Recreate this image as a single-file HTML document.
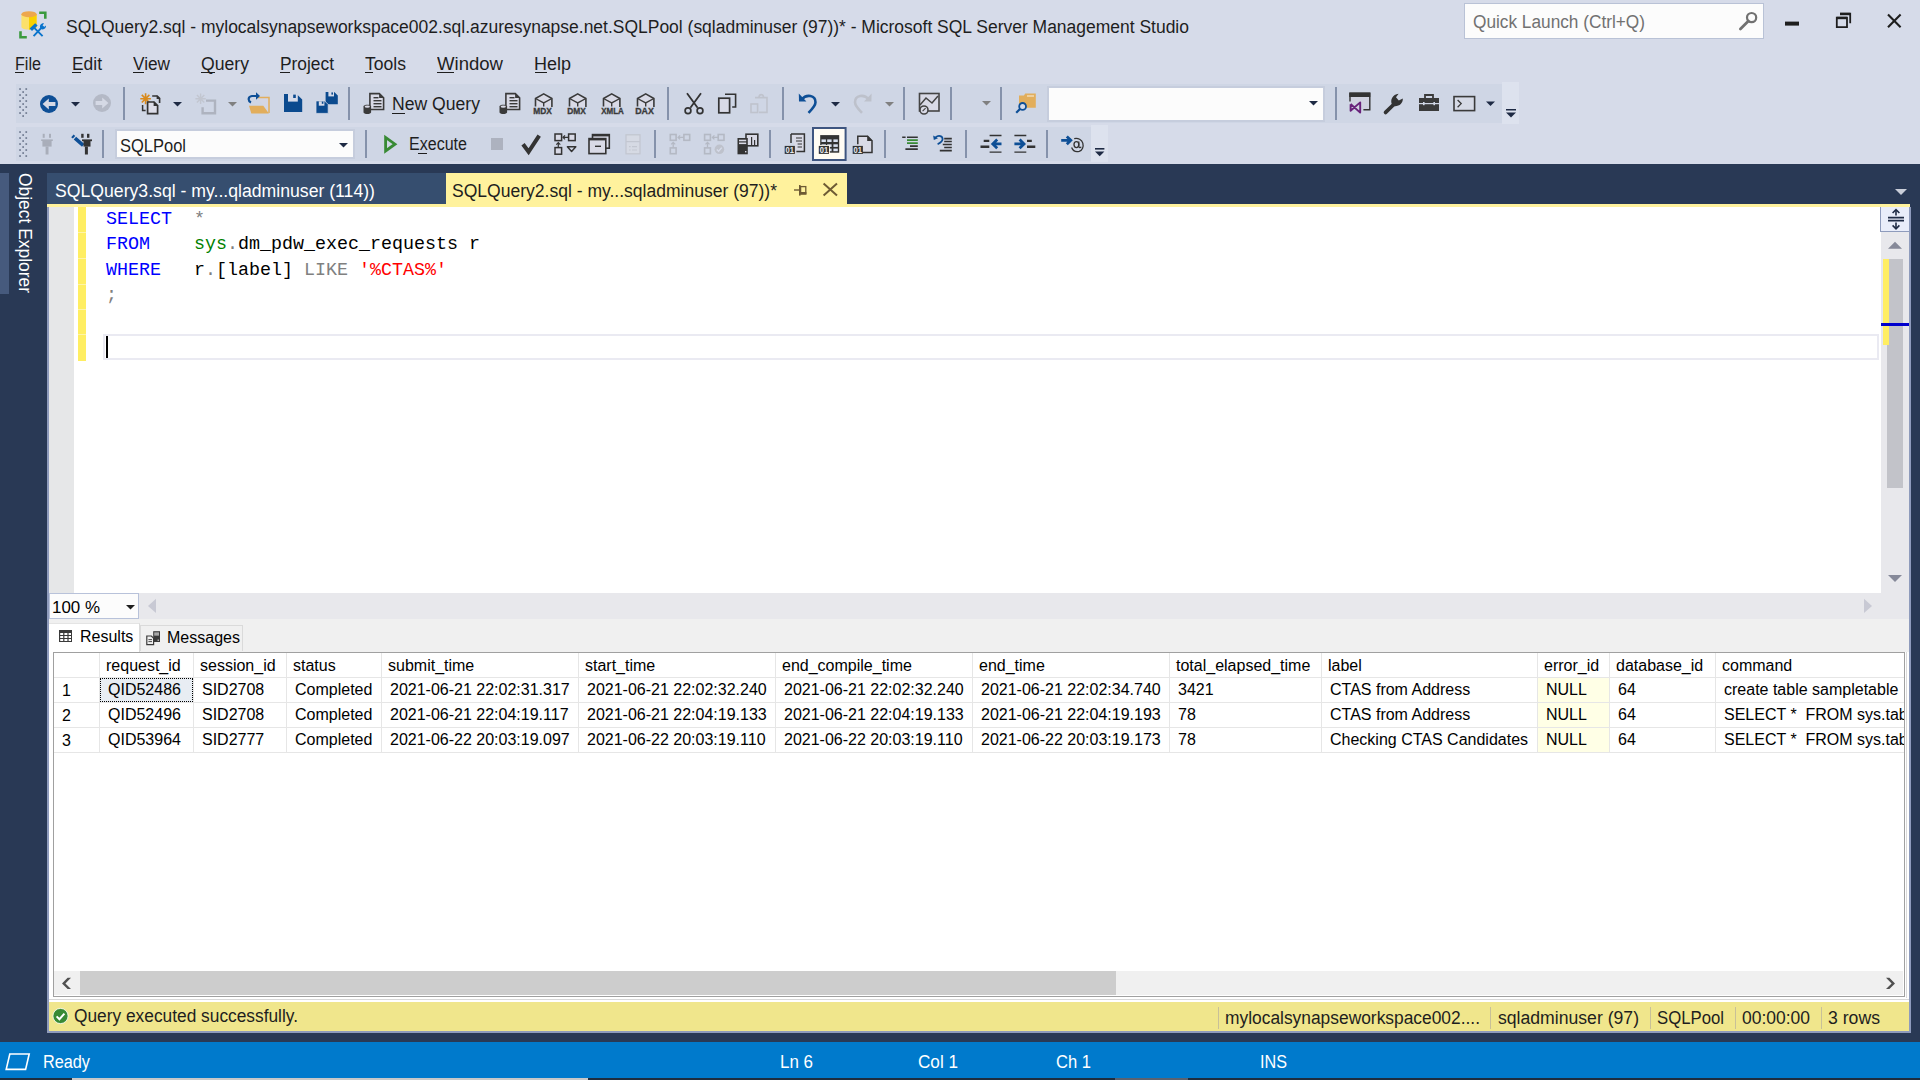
<!DOCTYPE html>
<html><head><meta charset="utf-8"><title>SSMS</title>
<style>
html,body{margin:0;padding:0;}
body{width:1920px;height:1080px;position:relative;overflow:hidden;background:#D6DBE9;font-family:"Liberation Sans",sans-serif;}
svg{display:block;overflow:visible}
</style></head><body>
<div style="position:absolute;left:66px;top:15.76px;font:18px/22px 'Liberation Sans', sans-serif;color:#1E1E1E;white-space:pre;transform:scaleX(0.9707);transform-origin:0 0;">SQLQuery2.sql - mylocalsynapseworkspace002.sql.azuresynapse.net.SQLPool (sqladminuser (97))* - Microsoft SQL Server Management Studio</div>
<div style="position:absolute;left:1464px;top:3px;width:300px;height:36px;background:#FCFCFC;box-sizing:border-box;border:1px solid #B9C2D6;"></div>
<div style="position:absolute;left:1473px;top:10.76px;font:18px/22px 'Liberation Sans', sans-serif;color:#717171;white-space:pre;transform:scaleX(0.9579);transform-origin:0 0;">Quick Launch (Ctrl+Q)</div>
<div style="position:absolute;left:15px;top:52.76px;font:18px/22px 'Liberation Sans', sans-serif;color:#1E1E1E;white-space:pre;transform:scaleX(0.8961);transform-origin:0 0;">File</div>
<div style="position:absolute;left:72px;top:52.76px;font:18px/22px 'Liberation Sans', sans-serif;color:#1E1E1E;white-space:pre;transform:scaleX(0.9668);transform-origin:0 0;">Edit</div>
<div style="position:absolute;left:133px;top:52.76px;font:18px/22px 'Liberation Sans', sans-serif;color:#1E1E1E;white-space:pre;transform:scaleX(0.9560);transform-origin:0 0;">View</div>
<div style="position:absolute;left:201px;top:52.76px;font:18px/22px 'Liberation Sans', sans-serif;color:#1E1E1E;white-space:pre;transform:scaleX(0.9790);transform-origin:0 0;">Query</div>
<div style="position:absolute;left:280px;top:52.76px;font:18px/22px 'Liberation Sans', sans-serif;color:#1E1E1E;white-space:pre;transform:scaleX(0.9637);transform-origin:0 0;">Project</div>
<div style="position:absolute;left:365px;top:52.76px;font:18px/22px 'Liberation Sans', sans-serif;color:#1E1E1E;white-space:pre;transform:scaleX(0.9755);transform-origin:0 0;">Tools</div>
<div style="position:absolute;left:437px;top:52.76px;font:18px/22px 'Liberation Sans', sans-serif;color:#1E1E1E;white-space:pre;transform:scaleX(1.0307);transform-origin:0 0;">Window</div>
<div style="position:absolute;left:534px;top:52.76px;font:18px/22px 'Liberation Sans', sans-serif;color:#1E1E1E;white-space:pre;transform:scaleX(0.9992);transform-origin:0 0;">Help</div>
<div style="position:absolute;left:16px;top:84px;width:1486px;height:39px;background:#CFD6E5;"></div>
<div style="position:absolute;left:1502px;top:82px;width:17px;height:42px;background:#DDE2EE;"></div>
<div style="position:absolute;left:16px;top:127px;width:1075px;height:34px;background:#CFD6E5;"></div>
<div style="position:absolute;left:1091px;top:125px;width:17px;height:37px;background:#DDE2EE;"></div>
<div style="position:absolute;left:1047px;top:86px;width:278px;height:36px;background:#FCFCFC;box-sizing:border-box;border:2px solid #C6CDDD;"></div>
<div style="position:absolute;left:115px;top:129px;width:240px;height:30px;background:#FCFCFC;box-sizing:border-box;border:2px solid #C6CDDD;"></div>
<div style="position:absolute;left:392px;top:93.36px;font:18px/22px 'Liberation Sans', sans-serif;color:#1E1E1E;white-space:pre;transform:scaleX(0.9774);transform-origin:0 0;">New Query</div>
<div style="position:absolute;left:120px;top:134.76px;font:18px/22px 'Liberation Sans', sans-serif;color:#1E1E1E;white-space:pre;transform:scaleX(0.9161);transform-origin:0 0;">SQLPool</div>
<div style="position:absolute;left:409px;top:133.36px;font:18px/22px 'Liberation Sans', sans-serif;color:#1E1E1E;white-space:pre;transform:scaleX(0.8917);transform-origin:0 0;">Execute</div>
<div style="position:absolute;left:0px;top:164px;width:1920px;height:878px;background:#293955;"></div>
<div style="position:absolute;left:0px;top:173px;width:9px;height:121px;background:#465A7D;"></div>
<div style="position:absolute;left:34px;top:173px;width:121px;height:20px;transform-origin:0 0;transform:rotate(90deg);"></div>
<div style="position:absolute;left:47px;top:173px;width:399px;height:31px;background:#364E6F;"></div>
<div style="position:absolute;left:446px;top:173px;width:401px;height:31px;background:#FFF29D;"></div>
<div style="position:absolute;left:47px;top:204px;width:1863px;height:3px;background:#FFF29D;"></div>
<div style="position:absolute;left:55px;top:179.76px;font:18px/22px 'Liberation Sans', sans-serif;color:#FFFFFF;white-space:pre;transform:scaleX(0.9802);transform-origin:0 0;">SQLQuery3.sql - my...qladminuser (114))</div>
<div style="position:absolute;left:452px;top:179.76px;font:18px/22px 'Liberation Sans', sans-serif;color:#1E1E1E;white-space:pre;transform:scaleX(0.9737);transform-origin:0 0;">SQLQuery2.sql - my...sqladminuser (97))*</div>
<div style="position:absolute;left:47px;top:207px;width:1863px;height:411px;background:#FFFFFF;"></div>
<div style="position:absolute;left:47px;top:207px;width:2px;height:826px;background:#8E9BBC;"></div>
<div style="position:absolute;left:49px;top:207px;width:25px;height:386px;background:#E6E7E8;"></div>
<div style="position:absolute;left:78px;top:207px;width:8px;height:154px;background:#FFEE62;"></div>
<div style="position:absolute;left:103px;top:334px;width:1776px;height:26px;background:transparent;box-sizing:border-box;border:2px solid #EAEAF2;"></div>
<div style="position:absolute;left:106px;top:336px;width:2px;height:22px;background:#000000;"></div>
<div style="position:absolute;left:1881px;top:207px;width:28px;height:386px;background:#E8E8EC;"></div>
<div style="position:absolute;left:1909px;top:207px;width:2px;height:826px;background:#8E9BBC;"></div>
<div style="position:absolute;left:1887px;top:259px;width:16px;height:229px;background:#C2C3C9;"></div>
<div style="position:absolute;left:1883px;top:259px;width:6px;height:86px;background:#FFEE62;"></div>
<div style="position:absolute;left:1881px;top:323px;width:28px;height:3px;background:#0000CD;"></div>
<div style="position:absolute;left:1880px;top:207px;width:29px;height:25px;background:#E9EDFA;box-sizing:border-box;border-left:1px solid #8E9BBC;border-bottom:1px solid #8E9BBC;"></div>
<div style="position:absolute;left:49px;top:593px;width:1860px;height:26px;background:#E8E8EC;"></div>
<div style="position:absolute;left:49px;top:593px;width:90px;height:26px;background:#FCFCFC;box-sizing:border-box;border:1px solid #B8C2DA;"></div>
<div style="position:absolute;left:52px;top:597.96px;font:16px/19px 'Liberation Sans', sans-serif;color:#000000;white-space:pre;transform:scaleX(1.0579);transform-origin:0 0;">100 %</div>
<div style="position:absolute;left:49px;top:619px;width:1860px;height:382px;background:#F0F0F0;"></div>
<div style="position:absolute;left:49px;top:623px;width:91px;height:29px;background:#FFFFFF;box-sizing:border-box;border-right:1px solid #DADADA;border-top:1px solid #E4E4E4;"></div>
<div style="position:absolute;left:140px;top:625px;width:103px;height:26px;background:#F0F0F0;box-sizing:border-box;border:1px solid #DADADA;border-bottom:none;"></div>
<div style="position:absolute;left:80px;top:626.96px;font:16px/19px 'Liberation Sans', sans-serif;color:#000000;white-space:pre;">Results</div>
<div style="position:absolute;left:167px;top:628.46px;font:16px/19px 'Liberation Sans', sans-serif;color:#000000;white-space:pre;">Messages</div>
<div style="position:absolute;left:49px;top:652px;width:1860px;height:350px;background:#FFFFFF;"></div>
<div style="position:absolute;left:1906px;top:652px;width:1px;height:346px;background:#DADADA;"></div>
<div style="position:absolute;left:53px;top:652px;width:1852px;height:345px;background:#FFFFFF;box-sizing:border-box;border:1px solid #A0A0A0;border-right:1.5px solid #A0A0A0;border-bottom:1.5px solid #A0A0A0;"></div>
<div style="position:absolute;left:99px;top:653px;width:1px;height:100px;background:#E6E6E6;"></div>
<div style="position:absolute;left:193px;top:653px;width:1px;height:100px;background:#E6E6E6;"></div>
<div style="position:absolute;left:286px;top:653px;width:1px;height:100px;background:#E6E6E6;"></div>
<div style="position:absolute;left:381px;top:653px;width:1px;height:100px;background:#E6E6E6;"></div>
<div style="position:absolute;left:578px;top:653px;width:1px;height:100px;background:#E6E6E6;"></div>
<div style="position:absolute;left:775px;top:653px;width:1px;height:100px;background:#E6E6E6;"></div>
<div style="position:absolute;left:972px;top:653px;width:1px;height:100px;background:#E6E6E6;"></div>
<div style="position:absolute;left:1169px;top:653px;width:1px;height:100px;background:#E6E6E6;"></div>
<div style="position:absolute;left:1321px;top:653px;width:1px;height:100px;background:#E6E6E6;"></div>
<div style="position:absolute;left:1537px;top:653px;width:1px;height:100px;background:#E6E6E6;"></div>
<div style="position:absolute;left:1609px;top:653px;width:1px;height:100px;background:#E6E6E6;"></div>
<div style="position:absolute;left:1715px;top:653px;width:1px;height:100px;background:#E6E6E6;"></div>
<div style="position:absolute;left:54px;top:677px;width:1850px;height:1px;background:#E6E6E6;"></div>
<div style="position:absolute;left:54px;top:702px;width:1850px;height:1px;background:#E6E6E6;"></div>
<div style="position:absolute;left:54px;top:727px;width:1850px;height:1px;background:#E6E6E6;"></div>
<div style="position:absolute;left:54px;top:752px;width:1850px;height:1px;background:#E6E6E6;"></div>
<div style="position:absolute;left:100px;top:678px;width:93px;height:24px;background:#E8EDF3;box-sizing:border-box;border:1px dotted #000;"></div>
<div style="position:absolute;left:1538px;top:678px;width:71px;height:24px;background:#FFFFE6;"></div>
<div style="position:absolute;left:1538px;top:703px;width:71px;height:24px;background:#FFFFE6;"></div>
<div style="position:absolute;left:1538px;top:728px;width:71px;height:24px;background:#FFFFE6;"></div>
<div style="position:absolute;left:106px;top:655.96px;font:16px/19px 'Liberation Sans', sans-serif;color:#000000;white-space:pre;">request_id</div>
<div style="position:absolute;left:200px;top:655.96px;font:16px/19px 'Liberation Sans', sans-serif;color:#000000;white-space:pre;">session_id</div>
<div style="position:absolute;left:293px;top:655.96px;font:16px/19px 'Liberation Sans', sans-serif;color:#000000;white-space:pre;">status</div>
<div style="position:absolute;left:388px;top:655.96px;font:16px/19px 'Liberation Sans', sans-serif;color:#000000;white-space:pre;">submit_time</div>
<div style="position:absolute;left:585px;top:655.96px;font:16px/19px 'Liberation Sans', sans-serif;color:#000000;white-space:pre;">start_time</div>
<div style="position:absolute;left:782px;top:655.96px;font:16px/19px 'Liberation Sans', sans-serif;color:#000000;white-space:pre;">end_compile_time</div>
<div style="position:absolute;left:979px;top:655.96px;font:16px/19px 'Liberation Sans', sans-serif;color:#000000;white-space:pre;">end_time</div>
<div style="position:absolute;left:1176px;top:655.96px;font:16px/19px 'Liberation Sans', sans-serif;color:#000000;white-space:pre;">total_elapsed_time</div>
<div style="position:absolute;left:1328px;top:655.96px;font:16px/19px 'Liberation Sans', sans-serif;color:#000000;white-space:pre;">label</div>
<div style="position:absolute;left:1544px;top:655.96px;font:16px/19px 'Liberation Sans', sans-serif;color:#000000;white-space:pre;">error_id</div>
<div style="position:absolute;left:1616px;top:655.96px;font:16px/19px 'Liberation Sans', sans-serif;color:#000000;white-space:pre;">database_id</div>
<div style="position:absolute;left:1722px;top:655.96px;font:16px/19px 'Liberation Sans', sans-serif;color:#000000;white-space:pre;">command</div>
<div style="position:absolute;left:62px;top:680.76px;font:16px/19px 'Liberation Sans', sans-serif;color:#000000;white-space:pre;">1</div>
<div style="position:absolute;left:108px;top:679.96px;font:16px/19px 'Liberation Sans', sans-serif;color:#000000;white-space:pre;">QID52486</div>
<div style="position:absolute;left:202px;top:679.96px;font:16px/19px 'Liberation Sans', sans-serif;color:#000000;white-space:pre;">SID2708</div>
<div style="position:absolute;left:295px;top:679.96px;font:16px/19px 'Liberation Sans', sans-serif;color:#000000;white-space:pre;">Completed</div>
<div style="position:absolute;left:390px;top:679.96px;font:16px/19px 'Liberation Sans', sans-serif;color:#000000;white-space:pre;">2021-06-21 22:02:31.317</div>
<div style="position:absolute;left:587px;top:679.96px;font:16px/19px 'Liberation Sans', sans-serif;color:#000000;white-space:pre;">2021-06-21 22:02:32.240</div>
<div style="position:absolute;left:784px;top:679.96px;font:16px/19px 'Liberation Sans', sans-serif;color:#000000;white-space:pre;">2021-06-21 22:02:32.240</div>
<div style="position:absolute;left:981px;top:679.96px;font:16px/19px 'Liberation Sans', sans-serif;color:#000000;white-space:pre;">2021-06-21 22:02:34.740</div>
<div style="position:absolute;left:1178px;top:679.96px;font:16px/19px 'Liberation Sans', sans-serif;color:#000000;white-space:pre;">3421</div>
<div style="position:absolute;left:1330px;top:679.96px;font:16px/19px 'Liberation Sans', sans-serif;color:#000000;white-space:pre;">CTAS from Address</div>
<div style="position:absolute;left:1546px;top:679.96px;font:16px/19px 'Liberation Sans', sans-serif;color:#000000;white-space:pre;">NULL</div>
<div style="position:absolute;left:1618px;top:679.96px;font:16px/19px 'Liberation Sans', sans-serif;color:#000000;white-space:pre;">64</div>
<div style="position:absolute;left:1724px;top:679.96px;font:16px/19px 'Liberation Sans', sans-serif;color:#000000;white-space:pre;width:180px;overflow:hidden;">create table sampletable</div>
<div style="position:absolute;left:62px;top:705.76px;font:16px/19px 'Liberation Sans', sans-serif;color:#000000;white-space:pre;">2</div>
<div style="position:absolute;left:108px;top:704.96px;font:16px/19px 'Liberation Sans', sans-serif;color:#000000;white-space:pre;">QID52496</div>
<div style="position:absolute;left:202px;top:704.96px;font:16px/19px 'Liberation Sans', sans-serif;color:#000000;white-space:pre;">SID2708</div>
<div style="position:absolute;left:295px;top:704.96px;font:16px/19px 'Liberation Sans', sans-serif;color:#000000;white-space:pre;">Completed</div>
<div style="position:absolute;left:390px;top:704.96px;font:16px/19px 'Liberation Sans', sans-serif;color:#000000;white-space:pre;">2021-06-21 22:04:19.117</div>
<div style="position:absolute;left:587px;top:704.96px;font:16px/19px 'Liberation Sans', sans-serif;color:#000000;white-space:pre;">2021-06-21 22:04:19.133</div>
<div style="position:absolute;left:784px;top:704.96px;font:16px/19px 'Liberation Sans', sans-serif;color:#000000;white-space:pre;">2021-06-21 22:04:19.133</div>
<div style="position:absolute;left:981px;top:704.96px;font:16px/19px 'Liberation Sans', sans-serif;color:#000000;white-space:pre;">2021-06-21 22:04:19.193</div>
<div style="position:absolute;left:1178px;top:704.96px;font:16px/19px 'Liberation Sans', sans-serif;color:#000000;white-space:pre;">78</div>
<div style="position:absolute;left:1330px;top:704.96px;font:16px/19px 'Liberation Sans', sans-serif;color:#000000;white-space:pre;">CTAS from Address</div>
<div style="position:absolute;left:1546px;top:704.96px;font:16px/19px 'Liberation Sans', sans-serif;color:#000000;white-space:pre;">NULL</div>
<div style="position:absolute;left:1618px;top:704.96px;font:16px/19px 'Liberation Sans', sans-serif;color:#000000;white-space:pre;">64</div>
<div style="position:absolute;left:1724px;top:704.96px;font:16px/19px 'Liberation Sans', sans-serif;color:#000000;white-space:pre;width:180px;overflow:hidden;">SELECT *  FROM sys.tables</div>
<div style="position:absolute;left:62px;top:730.76px;font:16px/19px 'Liberation Sans', sans-serif;color:#000000;white-space:pre;">3</div>
<div style="position:absolute;left:108px;top:729.96px;font:16px/19px 'Liberation Sans', sans-serif;color:#000000;white-space:pre;">QID53964</div>
<div style="position:absolute;left:202px;top:729.96px;font:16px/19px 'Liberation Sans', sans-serif;color:#000000;white-space:pre;">SID2777</div>
<div style="position:absolute;left:295px;top:729.96px;font:16px/19px 'Liberation Sans', sans-serif;color:#000000;white-space:pre;">Completed</div>
<div style="position:absolute;left:390px;top:729.96px;font:16px/19px 'Liberation Sans', sans-serif;color:#000000;white-space:pre;">2021-06-22 20:03:19.097</div>
<div style="position:absolute;left:587px;top:729.96px;font:16px/19px 'Liberation Sans', sans-serif;color:#000000;white-space:pre;">2021-06-22 20:03:19.110</div>
<div style="position:absolute;left:784px;top:729.96px;font:16px/19px 'Liberation Sans', sans-serif;color:#000000;white-space:pre;">2021-06-22 20:03:19.110</div>
<div style="position:absolute;left:981px;top:729.96px;font:16px/19px 'Liberation Sans', sans-serif;color:#000000;white-space:pre;">2021-06-22 20:03:19.173</div>
<div style="position:absolute;left:1178px;top:729.96px;font:16px/19px 'Liberation Sans', sans-serif;color:#000000;white-space:pre;">78</div>
<div style="position:absolute;left:1330px;top:729.96px;font:16px/19px 'Liberation Sans', sans-serif;color:#000000;white-space:pre;">Checking CTAS Candidates</div>
<div style="position:absolute;left:1546px;top:729.96px;font:16px/19px 'Liberation Sans', sans-serif;color:#000000;white-space:pre;">NULL</div>
<div style="position:absolute;left:1618px;top:729.96px;font:16px/19px 'Liberation Sans', sans-serif;color:#000000;white-space:pre;">64</div>
<div style="position:absolute;left:1724px;top:729.96px;font:16px/19px 'Liberation Sans', sans-serif;color:#000000;white-space:pre;width:180px;overflow:hidden;">SELECT *  FROM sys.tables</div>
<div style="position:absolute;left:54px;top:971px;width:1849px;height:24px;background:#F0F0F0;"></div>
<div style="position:absolute;left:80px;top:971px;width:1036px;height:24px;background:#CDCDCD;"></div>
<div style="position:absolute;left:49px;top:1002px;width:1860px;height:29px;background:#F0E68C;"></div>
<div style="position:absolute;left:47px;top:1031px;width:1864px;height:2px;background:#8E9BBC;"></div>
<div style="position:absolute;left:74px;top:1005.26px;font:18px/22px 'Liberation Sans', sans-serif;color:#1E1E1E;white-space:pre;transform:scaleX(0.9623);transform-origin:0 0;">Query executed successfully.</div>
<div style="position:absolute;left:1225px;top:1006.76px;font:18px/22px 'Liberation Sans', sans-serif;color:#1E1E1E;white-space:pre;transform:scaleX(0.9654);transform-origin:0 0;">mylocalsynapseworkspace002....</div>
<div style="position:absolute;left:1498px;top:1006.76px;font:18px/22px 'Liberation Sans', sans-serif;color:#1E1E1E;white-space:pre;transform:scaleX(0.9787);transform-origin:0 0;">sqladminuser (97)</div>
<div style="position:absolute;left:1657px;top:1006.76px;font:18px/22px 'Liberation Sans', sans-serif;color:#1E1E1E;white-space:pre;transform:scaleX(0.9300);transform-origin:0 0;">SQLPool</div>
<div style="position:absolute;left:1742px;top:1006.76px;font:18px/22px 'Liberation Sans', sans-serif;color:#1E1E1E;white-space:pre;transform:scaleX(0.9703);transform-origin:0 0;">00:00:00</div>
<div style="position:absolute;left:1828px;top:1006.76px;font:18px/22px 'Liberation Sans', sans-serif;color:#1E1E1E;white-space:pre;transform:scaleX(0.9808);transform-origin:0 0;">3 rows</div>
<div style="position:absolute;left:1218px;top:1007px;width:1px;height:22px;background:#C8C098;"></div>
<div style="position:absolute;left:1490px;top:1007px;width:1px;height:22px;background:#C8C098;"></div>
<div style="position:absolute;left:1650px;top:1007px;width:1px;height:22px;background:#C8C098;"></div>
<div style="position:absolute;left:1735px;top:1007px;width:1px;height:22px;background:#C8C098;"></div>
<div style="position:absolute;left:1821px;top:1007px;width:1px;height:22px;background:#C8C098;"></div>
<div style="position:absolute;left:0px;top:1042px;width:1920px;height:36px;background:#007ACC;"></div>
<div style="position:absolute;left:0px;top:1078px;width:1920px;height:2px;background:#1E2D3F;"></div>
<div style="position:absolute;left:72px;top:1078px;width:516px;height:2px;background:#C8C8C8;"></div>
<div style="position:absolute;left:1115px;top:1078px;width:73px;height:2px;background:#5A6270;"></div>
<div style="position:absolute;left:43px;top:1050.76px;font:18px/22px 'Liberation Sans', sans-serif;color:#FFFFFF;white-space:pre;transform:scaleX(0.9033);transform-origin:0 0;">Ready</div>
<div style="position:absolute;left:780px;top:1050.76px;font:18px/22px 'Liberation Sans', sans-serif;color:#FFFFFF;white-space:pre;transform:scaleX(0.9416);transform-origin:0 0;">Ln 6</div>
<div style="position:absolute;left:918px;top:1050.76px;font:18px/22px 'Liberation Sans', sans-serif;color:#FFFFFF;white-space:pre;transform:scaleX(0.9517);transform-origin:0 0;">Col 1</div>
<div style="position:absolute;left:1056px;top:1050.76px;font:18px/22px 'Liberation Sans', sans-serif;color:#FFFFFF;white-space:pre;transform:scaleX(0.9203);transform-origin:0 0;">Ch 1</div>
<div style="position:absolute;left:1260px;top:1050.76px;font:18px/22px 'Liberation Sans', sans-serif;color:#FFFFFF;white-space:pre;transform:scaleX(0.8995);transform-origin:0 0;">INS</div>
<div style="position:absolute;left:106px;top:208.82px;font:18.33px/22px 'Liberation Mono', monospace;white-space:pre;"><span style="color:#0000FF">SELECT</span><span style="color:#000000">  </span><span style="color:#808080">*</span></div>
<div style="position:absolute;left:106px;top:234.32px;font:18.33px/22px 'Liberation Mono', monospace;white-space:pre;"><span style="color:#0000FF">FROM</span><span style="color:#000000">    </span><span style="color:#008000">sys</span><span style="color:#808080">.</span><span style="color:#000000">dm_pdw_exec_requests r</span></div>
<div style="position:absolute;left:106px;top:259.82px;font:18.33px/22px 'Liberation Mono', monospace;white-space:pre;"><span style="color:#0000FF">WHERE</span><span style="color:#000000">   </span><span style="color:#000000">r</span><span style="color:#808080">.</span><span style="color:#000000">[label]</span><span style="color:#000000"> </span><span style="color:#808080">LIKE</span><span style="color:#000000"> </span><span style="color:#FF0000">&#x27;%CTAS%&#x27;</span></div>
<div style="position:absolute;left:106px;top:285.32px;font:18.33px/22px 'Liberation Mono', monospace;white-space:pre;"><span style="color:#808080">;</span></div>
<div style="position:absolute;left:35.8px;top:172.5px;font:18px/22px 'Liberation Sans',sans-serif;color:#FFFFFF;white-space:pre;transform-origin:0 0;transform:rotate(90deg) scaleX(0.967);">Object Explorer</div>
<svg style="position:absolute;left:0;top:0;" width="1920" height="164" viewBox="0 0 1920 164"><rect x="19.2" y="88.2" width="1.7" height="1.7" fill="#6F7A90"/><rect x="25.4" y="88.2" width="1.7" height="1.7" fill="#6F7A90"/><rect x="22.3" y="91.2" width="1.7" height="1.7" fill="#6F7A90"/><rect x="19.2" y="94.2" width="1.7" height="1.7" fill="#6F7A90"/><rect x="25.4" y="94.2" width="1.7" height="1.7" fill="#6F7A90"/><rect x="22.3" y="97.2" width="1.7" height="1.7" fill="#6F7A90"/><rect x="19.2" y="100.2" width="1.7" height="1.7" fill="#6F7A90"/><rect x="25.4" y="100.2" width="1.7" height="1.7" fill="#6F7A90"/><rect x="22.3" y="103.2" width="1.7" height="1.7" fill="#6F7A90"/><rect x="19.2" y="106.2" width="1.7" height="1.7" fill="#6F7A90"/><rect x="25.4" y="106.2" width="1.7" height="1.7" fill="#6F7A90"/><rect x="22.3" y="109.2" width="1.7" height="1.7" fill="#6F7A90"/><rect x="19.2" y="112.2" width="1.7" height="1.7" fill="#6F7A90"/><rect x="25.4" y="112.2" width="1.7" height="1.7" fill="#6F7A90"/><rect x="22.3" y="115.2" width="1.7" height="1.7" fill="#6F7A90"/><circle cx="49" cy="104" r="9" fill="#0E4F96"/><path d="M42.6 104 L48.8 98.4 L48.8 102 L55.4 102 L55.4 106 L48.8 106 L48.8 109.6 Z" fill="#D5D9E5"/><path d="M71 102h9l-4.5 4.5z" fill="#1E2A44"/><circle cx="102" cy="103" r="9" fill="#B4B9C6"/><path d="M108.4 103 L102.2 97.4 L102.2 101 L95.6 101 L95.6 105 L102.2 105 L102.2 108.6 Z" fill="#D5D9E5"/><rect x="123" y="87" width="2" height="33" fill="#8592AB"/><g stroke="#D98A1C" stroke-width="1.6" fill="none"><path d="M145.6 93.2v11M140.3 98.7h10.6M141.8 94.9l7.6 7.6M149.4 94.9l-7.6 7.6"/></g><path d="M152.2 96h5l2.4 2.4v4.6" stroke="#333333" stroke-width="1.6" fill="none"/><path d="M156.6 95.2l3.8 3.8h-3.8z" fill="#333333"/><path d="M147.6 102h6.4l3.6 3.6v8h-10z" fill="#DCDDE8" stroke="#333333" stroke-width="1.7"/><path d="M153.6 101.2l4.8 4.8h-4.8z" fill="#333333"/><path d="M142.6 105v5.6h3" stroke="#333333" stroke-width="1.5" fill="none"/><path d="M173 102h9l-4.5 4.5z" fill="#1E2A44"/><g stroke="#C2C6D0" stroke-width="1.4" fill="none"><path d="M200.6 93.5v10.4M195.4 98.7h10.4M196.9 95l7.4 7.4M204.3 95l-7.4 7.4"/></g><path d="M206 100.6h9v12.6h-12.4v-6" fill="none" stroke="#AEB3BF" stroke-width="2.4"/><path d="M228 102h9l-4.5 4.5z" fill="#808080"/><path d="M257.5 97.5h11.5v15.5" fill="#D4D6E4" stroke="#E2AE5C" stroke-width="1.5"/><path d="M249 105.8h14.3l5.6 7.8h-17.6z" fill="#E2AE5C"/><path d="M251 102.5c-3.3-1.5-3.2-6 1-6.5h5" stroke="#0E4F96" stroke-width="2.2" fill="none"/><path d="M256 92.2l4 3.8-4 3.8z" fill="#0E4F96"/><path d="M284 94h12.6l5.6 5.6v12.3h-18.2z" fill="#0B4A8E"/><rect x="288" y="94" width="9.8" height="7.6" fill="#D6DBE9"/><rect x="293.2" y="94.6" width="2.6" height="3.4" fill="#0B4A8E"/><path d="M325.6 92h8.6l3.6 3.6v8.7h-12.2z" fill="#0B4A8E"/><rect x="328.4" y="92" width="5.6" height="4.4" fill="#D6DBE9"/><rect x="331.4" y="92.4" width="1.6" height="2.2" fill="#0B4A8E"/><path d="M316 100.9h8.6l3.6 3.6v8.9h-12.2z" fill="#0B4A8E" stroke="#D6DBE9" stroke-width="0.8"/><rect x="318.8" y="101.3" width="5.6" height="4.4" fill="#D6DBE9"/><rect x="321.8" y="101.6" width="1.6" height="2.2" fill="#0B4A8E"/><rect x="348" y="87" width="2" height="33" fill="#8592AB"/><path d="M369.9 93.6h9.4l4.3 4.3v11.6h-13.7z" fill="#D9DAE6" stroke="#3A3A3A" stroke-width="1.6"/><path d="M379.1 93.6l4.5 4.5h-4.5z" fill="#3A3A3A"/><rect x="373.5" y="97" width="5" height="1.4" fill="#3A3A3A"/><rect x="373.5" y="100" width="8" height="1.4" fill="#3A3A3A"/><rect x="373.5" y="103" width="8" height="1.4" fill="#3A3A3A"/><rect x="373.5" y="106" width="8" height="1.4" fill="#3A3A3A"/><path d="M363.5 106.6c0-2.6 7.6-2.6 7.6 0v5.6c0 2.4-7.6 2.4-7.6 0z" fill="#3A3A3A"/><ellipse cx="367.3" cy="106.6" rx="2.6" ry="1.2" fill="#D9DAE6"/><path d="M505.9 93.6h9.4l4.3 4.3v11.6h-13.7z" fill="#D9DAE6" stroke="#3A3A3A" stroke-width="1.6"/><path d="M515.1 93.6l4.5 4.5h-4.5z" fill="#3A3A3A"/><rect x="509.5" y="97" width="5" height="1.4" fill="#3A3A3A"/><rect x="509.5" y="100" width="8" height="1.4" fill="#3A3A3A"/><rect x="509.5" y="103" width="8" height="1.4" fill="#3A3A3A"/><rect x="509.5" y="106" width="8" height="1.4" fill="#3A3A3A"/><path d="M499.5 106.6c0-2.6 7.6-2.6 7.6 0v5.6c0 2.4-7.6 2.4-7.6 0z" fill="#3A3A3A"/><ellipse cx="503.3" cy="106.6" rx="2.6" ry="1.2" fill="#D9DAE6"/><path d="M535.5 106.5v-8l8.2-4.6 8.2 4.6v8.6" fill="#D9DAE6" stroke="#3A3A3A" stroke-width="1.6" stroke-linejoin="round"/><path d="M535.5 98.5l8.2 4.4 8.2-4.4M543.7 102.9v3.6" stroke="#3A3A3A" stroke-width="1.4" fill="none"/><text x="533.2" y="113.8" font-family="Liberation Sans" font-weight="bold" font-size="9.4" fill="#3A3A3A" stroke="#3A3A3A" stroke-width="0.35" textLength="18.6" lengthAdjust="spacingAndGlyphs">MDX</text><path d="M569.5 106.5v-8l8.2-4.6 8.2 4.6v8.6" fill="#D9DAE6" stroke="#3A3A3A" stroke-width="1.6" stroke-linejoin="round"/><path d="M569.5 98.5l8.2 4.4 8.2-4.4M577.7 102.9v3.6" stroke="#3A3A3A" stroke-width="1.4" fill="none"/><text x="567.2" y="113.8" font-family="Liberation Sans" font-weight="bold" font-size="9.4" fill="#3A3A3A" stroke="#3A3A3A" stroke-width="0.35" textLength="18.6" lengthAdjust="spacingAndGlyphs">DMX</text><path d="M603.5 106.5v-8l8.2-4.6 8.2 4.6v8.6" fill="#D9DAE6" stroke="#3A3A3A" stroke-width="1.6" stroke-linejoin="round"/><path d="M603.5 98.5l8.2 4.4 8.2-4.4M611.7 102.9v3.6" stroke="#3A3A3A" stroke-width="1.4" fill="none"/><text x="601.2" y="113.8" font-family="Liberation Sans" font-weight="bold" font-size="9.4" fill="#3A3A3A" stroke="#3A3A3A" stroke-width="0.35" textLength="22.6" lengthAdjust="spacingAndGlyphs">XMLA</text><path d="M637.5 106.5v-8l8.2-4.6 8.2 4.6v8.6" fill="#D9DAE6" stroke="#3A3A3A" stroke-width="1.6" stroke-linejoin="round"/><path d="M637.5 98.5l8.2 4.4 8.2-4.4M645.7 102.9v3.6" stroke="#3A3A3A" stroke-width="1.4" fill="none"/><text x="635.2" y="113.8" font-family="Liberation Sans" font-weight="bold" font-size="9.4" fill="#3A3A3A" stroke="#3A3A3A" stroke-width="0.35" textLength="18.6" lengthAdjust="spacingAndGlyphs">DAX</text><rect x="667" y="87" width="2" height="33" fill="#8592AB"/><path d="M687 93.2l10.6 14.6M701 93.2l-10.6 14.6" stroke="#333333" stroke-width="1.8" fill="none"/><circle cx="688" cy="110.8" r="2.9" fill="none" stroke="#333333" stroke-width="1.7"/><circle cx="700" cy="110.8" r="2.9" fill="none" stroke="#333333" stroke-width="1.7"/><path d="M725 94.2h10.6v12.8h-3.4" fill="none" stroke="#333333" stroke-width="1.6"/><rect x="718.8" y="98.2" width="10.8" height="14.6" fill="#D9DAE6" stroke="#333333" stroke-width="1.7"/><path d="M755 97.6h12v14.8h-8" fill="none" stroke="#BFC3CD" stroke-width="1.6"/><rect x="751" y="104" width="6.6" height="8.5" fill="none" stroke="#BFC3CD" stroke-width="1.6"/><path d="M759 97.6c0-4 4.5-4 4.5 0" fill="none" stroke="#BFC3CD" stroke-width="1.6"/><rect x="782" y="87" width="2" height="33" fill="#8592AB"/><path d="M801.5 99.6c5-6 14-4.5 14 2.6 0 3.4-2.4 6-7 10.6" fill="none" stroke="#0E4F96" stroke-width="2.6"/><path d="M798.8 93.6l0.2 7.8 7.4 0.2z" fill="#0E4F96"/><path d="M831 102h9l-4.5 4.5z" fill="#1E2A44"/><path d="M869 99.6c-5-6-14-4.5-14 2.6 0 3.4 2.4 6 7 10.6" fill="none" stroke="#BDC1CB" stroke-width="2.6"/><path d="M871.6 93.6l-0.2 7.8-7.4 0.2z" fill="#BDC1CB"/><path d="M885 102h9l-4.5 4.5z" fill="#808080"/><rect x="903" y="87" width="2" height="33" fill="#8592AB"/><rect x="919.5" y="93.5" width="19.5" height="17.5" fill="#D9DAE6" stroke="#444" stroke-width="1.6"/><path d="M920 105l6-7 6 5 6-7" fill="none" stroke="#444" stroke-width="1.5"/><circle cx="924" cy="110" r="4" fill="#D9DAE6" stroke="#444" stroke-width="1.6"/><path d="M922.6 111.2l3-3" stroke="#444" stroke-width="1.1"/><rect x="950" y="87" width="2" height="33" fill="#8592AB"/><path d="M982 101h9l-4.5 4.5z" fill="#808080"/><rect x="1000" y="87" width="2" height="33" fill="#8592AB"/><path d="M1019 95.5h5l1.2-2h10.6v14.2h-16.8z" fill="#E2AE5C"/><rect x="1027" y="95.2" width="7" height="1.6" fill="#F0D9B0"/><circle cx="1022.6" cy="106.4" r="3.4" fill="#D6DBE9" stroke="#0E4F96" stroke-width="1.8"/><path d="M1020.2 108.8l-4 4" stroke="#0E4F96" stroke-width="2.2"/><path d="M1309 101h9l-4.5 4.5z" fill="#1E2A44"/><rect x="1335" y="87" width="2" height="33" fill="#8592AB"/><rect x="1350.6" y="96.8" width="18.8" height="12.8" fill="#D0D2E0"/><path d="M1350 101.6v-8.4h19.8v16.6h-6.4" fill="none" stroke="#333" stroke-width="1.4"/><rect x="1349.3" y="92.6" width="21" height="4.4" fill="#333"/><path d="M1350.6 104.2v6.6l9.6-8.4v10.2l-9.6-8.6" fill="none" stroke="#68217A" stroke-width="1.9" stroke-linejoin="round"/><path d="M1385.6 112.4l8.6-8.4" stroke="#333" stroke-width="3.8" stroke-linecap="round"/><path d="M1392 104.4c-2.2-4.4 0.6-10 6.6-10.6l-2.6 3.4 2.8 3.4 4-2c0.4 4.6-4 8.6-9.4 7.6z" fill="#333"/><rect x="1419" y="98" width="20" height="13" fill="#3A3A3A"/><path d="M1425 98v-3h8v3" fill="none" stroke="#3A3A3A" stroke-width="1.8"/><rect x="1419" y="103" width="20" height="1.2" fill="#D0D6E4"/><rect x="1423" y="102" width="1.6" height="3.2" fill="#D0D6E4"/><rect x="1433.4" y="102" width="1.6" height="3.2" fill="#D0D6E4"/><rect x="1454" y="96.6" width="20.6" height="14" fill="#D6DAE6" stroke="#3A3A3A" stroke-width="1.6"/><path d="M1457.6 100l3.6 3.6-3.6 3.6" fill="none" stroke="#3A3A3A" stroke-width="1.3"/><path d="M1486 101.5h9l-4.5 4.5z" fill="#1E2A44"/><rect x="1506" y="109" width="10" height="1.5" fill="#1E2A44"/><path d="M1506 112.4h10l-5 5z" fill="#1E2A44"/><rect x="19.2" y="131.2" width="1.7" height="1.7" fill="#6F7A90"/><rect x="25.4" y="131.2" width="1.7" height="1.7" fill="#6F7A90"/><rect x="22.3" y="134.2" width="1.7" height="1.7" fill="#6F7A90"/><rect x="19.2" y="137.2" width="1.7" height="1.7" fill="#6F7A90"/><rect x="25.4" y="137.2" width="1.7" height="1.7" fill="#6F7A90"/><rect x="22.3" y="140.2" width="1.7" height="1.7" fill="#6F7A90"/><rect x="19.2" y="143.2" width="1.7" height="1.7" fill="#6F7A90"/><rect x="25.4" y="143.2" width="1.7" height="1.7" fill="#6F7A90"/><rect x="22.3" y="146.2" width="1.7" height="1.7" fill="#6F7A90"/><rect x="19.2" y="149.2" width="1.7" height="1.7" fill="#6F7A90"/><rect x="25.4" y="149.2" width="1.7" height="1.7" fill="#6F7A90"/><rect x="22.3" y="152.2" width="1.7" height="1.7" fill="#6F7A90"/><rect x="19.2" y="155.2" width="1.7" height="1.7" fill="#6F7A90"/><rect x="25.4" y="155.2" width="1.7" height="1.7" fill="#6F7A90"/><g fill="#A9AEBA"><rect x="42.7" y="133.8" width="2" height="4"/><rect x="49" y="133.8" width="2" height="4"/><rect x="41.2" y="139.4" width="11.6" height="1.6"/><rect x="42.4" y="141" width="9.2" height="5.6"/><rect x="45.6" y="146.5" width="2.9" height="8"/></g><path d="M72.4 135.8l10.8 9.6" stroke="#0E4F96" stroke-width="3.6" stroke-dasharray="2.2 1.2 20"/><g fill="#333"><rect x="81.2" y="133.8" width="2.4" height="4"/><rect x="87" y="133.8" width="2.4" height="4"/><rect x="82" y="139.4" width="10" height="1.8"/><rect x="83.5" y="141" width="7" height="5.6"/><rect x="84.9" y="146.5" width="3" height="8"/></g><rect x="102" y="130" width="2" height="28" fill="#8592AB"/><path d="M339 143h9l-4.5 4.5z" fill="#1E2A44"/><rect x="365" y="130" width="2" height="28" fill="#8592AB"/><path d="M385.6 137.4v13.6l9.4-6.8z" fill="none" stroke="#388A34" stroke-width="2.8" stroke-linejoin="miter"/><rect x="491" y="138" width="12" height="12" fill="#ADB2BF"/><path d="M523 144.2l5.6 7.6 10.6-16.2" fill="none" stroke="#333" stroke-width="4" stroke-linejoin="miter"/><g fill="#D9DAE6" stroke="#333" stroke-width="1.5"><rect x="555" y="134" width="6.6" height="6.6"/><rect x="568.6" y="134" width="6.6" height="6.6"/><rect x="555" y="147.6" width="6.6" height="6.6"/></g><path d="M563 137.3h5M565 135.3l-2 2 2 2M558.3 147.6v-5M556.3 144.6l2-2 2 2" stroke="#333" stroke-width="1.2" fill="none"/><path d="M567.4 146.8h8.4l-4.2 4.6z" fill="none" stroke="#333" stroke-width="1.5" stroke-linejoin="round"/><rect x="592.5" y="134.6" width="16.8" height="13.6" fill="#D9DAE6" stroke="#333" stroke-width="1.6"/><rect x="592.5" y="134" width="16.8" height="2.4" fill="#333"/><rect x="589" y="138.6" width="16.8" height="15" fill="#D9DAE6" stroke="#333" stroke-width="1.6"/><rect x="589" y="138" width="16.8" height="2.4" fill="#333"/><rect x="595" y="145.6" width="6" height="1.4" fill="#333"/><rect x="626" y="134.8" width="14" height="19" fill="#D6DAE4" stroke="#C3C7D1" stroke-width="1.3"/><path d="M626 141.6h14M629 146.6h1.6M632 146.6h5M629 150h1.6M632 150h5" stroke="#C3C7D1" stroke-width="1.2"/><rect x="654" y="130" width="2" height="28" fill="#8592AB"/><g fill="none" stroke="#B4B9C4" stroke-width="1.6"><rect x="670.3" y="134.5" width="5.8" height="5.8"/><rect x="683.9" y="134.5" width="5.8" height="5.8"/><rect x="670.3" y="147.9" width="5.8" height="5.8"/><path d="M683.7 137.4h-5.4M680.1 135.4l-2 2 2 2M673.2 147.6v-5M671.2 144.4l2-2 2 2" stroke-width="1.3"/></g><g fill="none" stroke="#B4B9C4" stroke-width="1.6"><rect x="704.5999999999999" y="134.5" width="5.8" height="5.8"/><rect x="718.1999999999999" y="134.5" width="5.8" height="5.8"/><rect x="704.5999999999999" y="147.9" width="5.8" height="5.8"/><path d="M718.0 137.4h-5.4M714.4 135.4l-2 2 2 2M707.5 147.6v-5M705.5 144.4l2-2 2 2" stroke-width="1.3"/></g><circle cx="719.4" cy="149.3" r="4.8" fill="#BEC2CC"/><path d="M716.8 149.4l1.8 1.8 3.2-3.6" stroke="#D6DBE9" stroke-width="1.4" fill="none"/><rect x="746" y="134.2" width="11.8" height="11.6" fill="#D9DAE6" stroke="#333" stroke-width="1.6"/><path d="M751.6 137v8.6M754.6 140v5.6" stroke="#333" stroke-width="1.2"/><rect x="737.5" y="138" width="10.3" height="16.3" fill="#333"/><rect x="739" y="139.7" width="7.2" height="1.6" fill="#D9DAE6"/><rect x="739" y="142.5" width="7.2" height="1.6" fill="#D9DAE6"/><rect x="745" y="151" width="1.4" height="1.4" fill="#D9DAE6"/><rect x="769" y="130" width="2" height="28" fill="#8592AB"/><path d="M791 134h13.4v17.4h-8" fill="#D9DAE6" stroke="#333" stroke-width="1.5"/><path d="M796 138h6M796 141h6M797.6 144h4.4M797.6 147h4.4" stroke="#333" stroke-width="1.2"/><path d="M791 134v9" stroke="#333" stroke-width="1.5"/><rect x="784.7" y="145.9" width="10.2" height="8" fill="#333"/><text x="785.6" y="153.1" font-family="Liberation Sans" font-weight="bold" font-size="8.4" fill="#E8E8EE" textLength="8.4" lengthAdjust="spacingAndGlyphs">01</text><rect x="813" y="128" width="32.6" height="32" fill="#FFFCF4" stroke="#3E5580" stroke-width="2"/><rect x="820.2" y="135.1" width="19" height="17.6" fill="#333"/><g fill="#D8E0F0"><rect x="821.5" y="139.4" width="4.4" height="2.6"/><rect x="827.2" y="139.4" width="4.4" height="2.6"/><rect x="833.4" y="139.4" width="4.4" height="2.6"/><rect x="821.5" y="144.3" width="4.4" height="2.6"/><rect x="827.2" y="144.3" width="4.4" height="2.6"/><rect x="833.4" y="144.3" width="4.4" height="2.6"/><rect x="821.5" y="148.6" width="4.4" height="2.6"/><rect x="827.2" y="148.6" width="4.4" height="2.6"/><rect x="833.4" y="148.6" width="4.4" height="2.6"/></g><rect x="818" y="145" width="11.8" height="9.6" fill="#FFFCF2"/><rect x="818.8" y="145.9" width="10.2" height="8" fill="#333"/><text x="819.6999999999999" y="153.1" font-family="Liberation Sans" font-weight="bold" font-size="8.4" fill="#E8E8EE" textLength="8.4" lengthAdjust="spacingAndGlyphs">01</text><path d="M857.6 152.4h14.4v-11.6l-4.4-4.6h-9.8v8" fill="#D9DAE6" stroke="#333" stroke-width="1.5"/><path d="M867.2 135.6l5.4 5.4h-5.4z" fill="#333"/><rect x="852.7" y="145.9" width="10.2" height="8" fill="#333"/><text x="853.6" y="153.1" font-family="Liberation Sans" font-weight="bold" font-size="8.4" fill="#E8E8EE" textLength="8.4" lengthAdjust="spacingAndGlyphs">01</text><rect x="884" y="130" width="2" height="28" fill="#8592AB"/><g stroke="#333" stroke-width="1.6"><path d="M902.2 137.2h3.4M907 137.2h10.8M910 146.1h7.8M905.4 149.1h12.4"/></g><g stroke="#388A34" stroke-width="1.7"><path d="M907 140.2h10.8M907 143.2h10.8"/></g><g stroke="#333" stroke-width="1.6"><path d="M944.2 138.6h7.6M944.2 141.5h7.6M942.8 144.5h9M944.2 147.5h7.6M939.8 150.6h12"/></g><path d="M935.6 137.4c3-2.8 7.2-1.4 7 1.8-0.2 2.2-2.4 3.8-5 5" fill="none" stroke="#0E4F96" stroke-width="1.8"/><path d="M933.2 135.4l0.6 4.6 4.2-1.8z" fill="#0E4F96"/><rect x="965" y="130" width="2" height="28" fill="#8592AB"/><g stroke="#333"><path d="M989.6 135.5h11.9M989.6 152.1h11.9" stroke-width="1.4"/><path d="M983.7 140.9h5.6M980.5 146.8h8.8" stroke-width="2.4"/></g><path d="M1001.5 143.9h-8.6M997.2 139.6l-4.4 4.3 4.4 4.3" fill="none" stroke="#0E4F96" stroke-width="2.8"/><g stroke="#333"><path d="M1014.4 135.5h11.9M1014.4 152.1h11.9" stroke-width="1.4"/><path d="M1027 140.9h4.8M1027 146.8h8.3" stroke-width="2.4"/></g><path d="M1014.4 143.9h8.8M1019.6 139.6l4.4 4.3-4.4 4.3" fill="none" stroke="#0E4F96" stroke-width="2.8"/><rect x="1046" y="130" width="2" height="28" fill="#8592AB"/><path d="M1061.2 140.3h8.4M1066.8 136.4l4 3.9-4 3.9" fill="none" stroke="#0E4F96" stroke-width="2.8"/><path d="M1071.6 147.6c1.4 3.4 4.6 4.6 7.6 3.8 3.2-1 4.6-4.6 3.6-8.2-1-3.4-4.6-5.6-8.6-4.6" fill="none" stroke="#333" stroke-width="1.3"/><ellipse cx="1076.4" cy="144.6" rx="2.4" ry="3" fill="none" stroke="#333" stroke-width="1.3"/><path d="M1078.8 141.6v4.6c0 1.6 1.8 1.8 2.4 0.6" fill="none" stroke="#333" stroke-width="1.3"/><rect x="1095" y="148" width="9.4" height="1.6" fill="#1E2A44"/><path d="M1095 151.6h9.4l-4.7 4.6z" fill="#1E2A44"/><path d="M20.5 31.2v6.1h6.3M39.2 12.8h6.1v6" fill="none" stroke="#3A9A3E" stroke-width="2.6"/><path d="M21.4 14.2v12.6c0 3.8 15.2 3.8 15.2 0v-12.6z" fill="#FBE06A"/><path d="M29 16.6v13.2c4.8-0.2 7.6-1.4 7.6-3v-12.6z" fill="#F9D100"/><ellipse cx="29" cy="14.2" rx="7.6" ry="3" fill="#EDA74E"/><path d="M29.6 29.6l2.2 -2.2 3.4-3.4 1.6 1.6-3.4 3.4z" fill="#D6DBE9"/><path d="M34 27.6l8.6 8.6M43.2 25.8l-9.6 10.4" stroke="#0A74CC" stroke-width="1.9"/><path d="M29.6 28.6l5.6-5.4 2.4 2.4-5.6 5.4z" fill="#0A74CC"/><path d="M40.6 28.6c-1.8-2.6 0.4-5.6 3.4-5.2l-1.6 2 1.6 1.6 2-1.4c0.4 3-2.8 5-5.4 3.2z" fill="#0A74CC"/><circle cx="1751.6" cy="17.6" r="4.6" fill="none" stroke="#717171" stroke-width="2.2"/><path d="M1748.4 21l-8 8" stroke="#717171" stroke-width="2.8" stroke-linecap="round"/><rect x="1785" y="21.6" width="14" height="4" fill="#1E1E1E"/><path d="M1840 13.6h10.2v9.6M1836.8 17.6h10.2v9.6h-10.2z" fill="none" stroke="#1E1E1E" stroke-width="1.8"/><rect x="1840" y="12.8" width="10.2" height="2.4" fill="#1E1E1E"/><rect x="1836.8" y="16.8" width="10.2" height="2.4" fill="#1E1E1E"/><path d="M1888 14.6l12.6 12.6M1900.6 14.6l-12.6 12.6" stroke="#1E1E1E" stroke-width="2.1"/></svg>
<div style="position:absolute;left:392px;top:112.6px;width:13px;height:1.4px;background:#1E1E1E;"></div>
<div style="position:absolute;left:418px;top:152.6px;width:9px;height:1.4px;background:#1E1E1E;"></div>
<svg style="position:absolute;left:1880px;top:180px;" width="40" height="420" viewBox="0 0 40 420">
<path d="M15 9h12l-6 6z" fill="#C9CED9"/>
<path d="M8 37.6h16M8 40.6h16" stroke="#1E2A44" stroke-width="1.8"/>
<path d="M16 30v5.5M16 42.5v6" stroke="#1E2A44" stroke-width="1.6"/>
<path d="M12.6 33l3.4-3.4 3.4 3.4M12.6 45.4l3.4 3.4 3.4-3.4" fill="none" stroke="#1E2A44" stroke-width="1.6"/>
<path d="M8 68.8h14l-7-7z" fill="#868999"/>
<path d="M8 395h14l-7 7z" fill="#868999"/>
</svg>
<svg style="position:absolute;left:140px;top:593px;" width="1760" height="25" viewBox="0 0 1760 25"><path d="M16 5.8v14.2l-8-7.1z" fill="#C8C9D4"/><path d="M1724 5.8v14.2l8-7.1z" fill="#C8C9D4"/></svg>
<svg style="position:absolute;left:0px;top:590px;" width="300" height="70" viewBox="0 0 300 70">
<path d="M126 15h9l-4.5 4.5z" fill="#1E1E1E"/>
<rect x="59" y="40" width="13" height="12" fill="#3A3A3A"/>
<g fill="#FFFFFF"><rect x="60.2" y="43" width="3" height="2"/><rect x="64.4" y="43" width="3" height="2"/><rect x="68.6" y="43" width="2.4" height="2"/>
<rect x="60.2" y="46" width="3" height="2"/><rect x="64.4" y="46" width="3" height="2"/><rect x="68.6" y="46" width="2.4" height="2"/>
<rect x="60.2" y="49" width="3" height="2"/><rect x="64.4" y="49" width="3" height="2"/><rect x="68.6" y="49" width="2.4" height="2"/></g>
<rect x="153.2" y="41.2" width="6.8" height="10.8" fill="#3A3A3A"/><rect x="154.2" y="42.6" width="4.8" height="1" fill="#F0F0F0"/><rect x="154.2" y="44.4" width="4.8" height="1" fill="#F0F0F0"/><rect x="157.6" y="49.6" width="1.2" height="1.2" fill="#F0F0F0"/>
<path d="M146.8 46h4.6l2.2 2.2v6.4h-6.8z" fill="#F0F0F0" stroke="#3A3A3A" stroke-width="1.2"/>
<path d="M148.4 49.6h3.6M148.4 51.6h3.6" stroke="#3A3A3A" stroke-width="0.9"/>
</svg>
<svg style="position:absolute;left:0px;top:960px;" width="1920" height="120" viewBox="0 0 1920 120">
<path d="M71 977.7h-3.4l-5.6 5.7 5.6 5.7h3.4l-5.6-5.7z" transform="translate(0,-960)" fill="#505050"/>
<path d="M1886 977.7h3.4l5.6 5.7-5.6 5.7h-3.4l5.6-5.7z" transform="translate(0,-960)" fill="#505050"/>
<circle cx="60.5" cy="56" r="7.6" fill="#388A34" stroke="#FFFFFF" stroke-width="0.8"/>
<path d="M56.6 56.4l2.8 2.8 5-5.6" fill="none" stroke="#FFFFFF" stroke-width="2"/>
<path d="M9.8 94h19.4l-3.6 15.4h-19.4z" fill="none" stroke="#FFFFFF" stroke-width="1.6"/>
</svg>
<svg style="position:absolute;left:780px;top:172px;" width="70" height="36" viewBox="0 0 70 36">
<path d="M14 18h5.4" stroke="#6E5B34" stroke-width="1.4"/>
<rect x="19" y="13" width="1.6" height="10.6" fill="#6E5B34"/>
<rect x="20.6" y="14.6" width="5.2" height="7.4" fill="none" stroke="#6E5B34" stroke-width="1.3"/>
<rect x="20.6" y="20" width="5.8" height="2.4" fill="#6E5B34"/>
<path d="M43.6 11.6l13.4 11.8M57 11.6l-13.4 11.8" stroke="#6E5B34" stroke-width="2"/>
</svg>
<div style="position:absolute;left:15px;top:71.6px;width:9px;height:1.5px;background:#1E1E1E;"></div>
<div style="position:absolute;left:72px;top:71.6px;width:9px;height:1.5px;background:#1E1E1E;"></div>
<div style="position:absolute;left:133px;top:71.6px;width:10.5px;height:1.5px;background:#1E1E1E;"></div>
<div style="position:absolute;left:201px;top:71.6px;width:14px;height:1.5px;background:#1E1E1E;"></div>
<div style="position:absolute;left:280px;top:71.6px;width:10px;height:1.5px;background:#1E1E1E;"></div>
<div style="position:absolute;left:365px;top:71.6px;width:7.5px;height:1.5px;background:#1E1E1E;"></div>
<div style="position:absolute;left:437px;top:71.6px;width:17px;height:1.5px;background:#1E1E1E;"></div>
<div style="position:absolute;left:534.5px;top:71.6px;width:12.5px;height:1.5px;background:#1E1E1E;"></div>
<div style="position:absolute;left:78px;top:232px;width:8px;height:1px;background:#FFF4A8;"></div>
<div style="position:absolute;left:78px;top:258px;width:8px;height:1px;background:#FFF4A8;"></div>
<div style="position:absolute;left:78px;top:284px;width:8px;height:1px;background:#FFF4A8;"></div>
<div style="position:absolute;left:78px;top:309px;width:8px;height:1px;background:#FFF4A8;"></div>
<div style="position:absolute;left:78px;top:334px;width:8px;height:1px;background:#FFF4A8;"></div>
<div style="position:absolute;left:49px;top:999px;width:1860px;height:1px;background:#D8D8D8;"></div>
</body></html>
